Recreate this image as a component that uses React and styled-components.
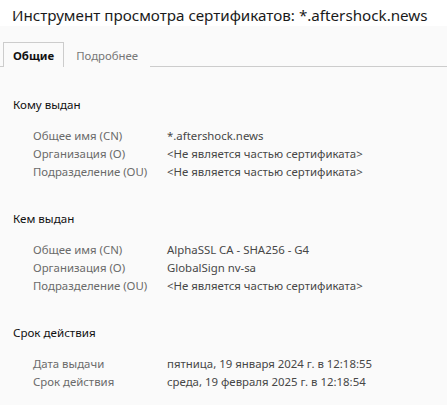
import React from 'react'
import styled, { createGlobalStyle } from 'styled-components'

const GlobalStyle = createGlobalStyle`
  html, body {
    margin: 0;
    padding: 0;
    background: #fafafa;
  }
  body {
    font-family: 'Noto Sans', 'Open Sans', sans-serif;
    -webkit-font-smoothing: antialiased;
  }
`

const Window = styled.div`
  width: 447px;
  height: 405px;
  overflow: hidden;
  background: #fafafa;
`

const TitleBar = styled.div`
  height: 26px;
  background: #ffffff;
  padding-left: 12px;
  font-size: 15.2px;
  line-height: 30px;
  color: #1a1a1a;
  white-space: nowrap;
`

const Tabs = styled.div`
  display: flex;
  align-items: flex-end;
  margin-top: 15px;
  padding-left: 3px;
  border-bottom: 1px solid #cccccc;
  height: 25px;
`

const Tab = styled.div`
  height: 25px;
  box-sizing: border-box;
  padding: 0 ${p => (p.active ? '9px 0 9px' : '11px')};
  font-size: 11.4px;
  line-height: 25px;
  font-weight: ${p => (p.active ? 700 : 400)};
  color: ${p => (p.active ? '#111' : '#777')};
  border: 1px solid ${p => (p.active ? '#cccccc' : 'transparent')};
  border-bottom: none;
  background: #fafafa;
  margin-bottom: -1px;
`

const Content = styled.div`
  padding: 29px 0 0 13px;
`

const Section = styled.section`
  margin-bottom: 29px;
`

const Heading = styled.div`
  font-size: 11.6px;
  line-height: 18px;
  color: #111;
  margin-bottom: 13px;
`

const Rows = styled.div`
  display: grid;
  grid-template-columns: 134px auto;
  padding-left: 20px;
  font-size: 11.4px;
  line-height: 18px;
`

const Label = styled.div`
  color: #6a6a6a;
  white-space: nowrap;
`

const Value = styled.div`
  color: #474747;
  white-space: nowrap;
`

const notPart = '<Не является частью сертификата>'

const sections = [
  {
    title: 'Кому выдан',
    rows: [
      ['Общее имя (CN)', '*.aftershock.news'],
      ['Организация (O)', notPart],
      ['Подразделение (OU)', notPart],
    ],
  },
  {
    title: 'Кем выдан',
    rows: [
      ['Общее имя (CN)', 'AlphaSSL CA - SHA256 - G4'],
      ['Организация (O)', 'GlobalSign nv-sa'],
      ['Подразделение (OU)', notPart],
    ],
  },
  {
    title: 'Срок действия',
    rows: [
      ['Дата выдачи', 'пятница, 19 января 2024 г. в 12:18:55'],
      ['Срок действия', 'среда, 19 февраля 2025 г. в 12:18:54'],
    ],
  },
]

const App = () => (
  <Window>
    <GlobalStyle />
    <TitleBar>Инструмент просмотра сертификатов: *.aftershock.news</TitleBar>
    <Tabs>
      <Tab active>Общие</Tab>
      <Tab>Подробнее</Tab>
    </Tabs>
    <Content>
      {sections.map(s => (
        <Section key={s.title}>
          <Heading>{s.title}</Heading>
          <Rows>
            {s.rows.map(([label, value]) => (
              <React.Fragment key={label}>
                <Label>{label}</Label>
                <Value>{value}</Value>
              </React.Fragment>
            ))}
          </Rows>
        </Section>
      ))}
    </Content>
  </Window>
)

export default App
